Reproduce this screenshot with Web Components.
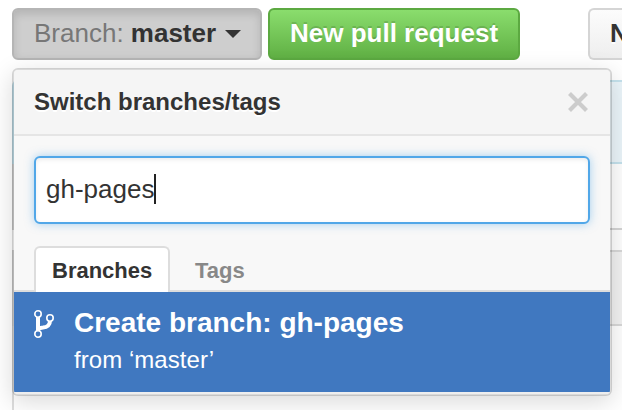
<!DOCTYPE html>
<html lang="en"><head><meta charset="utf-8"><title>Switch branches</title>
<style>
body{margin:0;width:622px;height:410px;overflow:hidden;position:relative;background:#fff;color:#333;font-family:"Liberation Sans",Arial,sans-serif}
</style></head><body>
<repo-page></repo-page>
<script>
const define=(name,html)=>customElements.define(name,class extends HTMLElement{
  constructor(){super();this.attachShadow({mode:'open'}).innerHTML=html;}
});
define('repo-button',`<style>
:host{display:flex;box-sizing:border-box;height:52px;padding:0 20px 2px;align-items:center;border:2px solid #d5d5d5;border-radius:6px;
background:linear-gradient(#fcfcfc,#eee);font-size:26px;line-height:46px;font-weight:bold;white-space:pre;text-shadow:0 2px 0 rgba(255,255,255,.9)}
:host([kind=selected]){font-weight:normal;background:#cecece;border-color:#b5b5b5;box-shadow:inset 0 4px 8px rgba(0,0,0,.13);text-shadow:none;color:#777}
:host([kind=primary]){color:#fff;border-color:#5ca941;background:linear-gradient(#8add6d,#60b044);text-shadow:0 -2px 0 rgba(0,0,0,.15)}
::slotted(b){color:#333}
i{display:none}
:host([kind=selected]) i{display:block;margin:2px 0 0 9px;border:8px solid transparent;border-top-color:#333;border-bottom:0}
</style><slot></slot><i></i>`);
define('repo-content',`<style>
:host{display:flex;flex-direction:column;margin:20px 0 0 12px}
div{box-sizing:border-box}
.tease{height:84px;background:#ebf5fa;border:2px solid #c5e2ed;border-right:0;border-radius:6px 0 0 0}
.info{height:66px;background:#fff;border:2px solid #d5d5d5;border-width:0 0 2px 2px}
.row{margin-top:20px;height:76px;background:#f2f2f2;border:2px solid #d8d8d8;border-right:0}
.rest{height:84px;border-left:2px solid #ddd;background:#fff}
</style><div class="tease"></div><div class="info"></div><div class="row"></div><div class="rest"></div>`);
define('branch-tab',`<style>
:host{display:block;box-sizing:border-box;height:46px;padding:0 16px;border:2px solid transparent;border-bottom:0;border-radius:6px 6px 0 0;
font-size:22px;font-weight:bold;line-height:45px;color:#888}
:host([selected]){background:#fff;border-color:#ddd;color:#333;width:136px}
</style><slot></slot>`);
define('branch-icon',`<style>:host{display:block;width:20px;height:28px}svg{display:block}</style>
<svg width="20" height="28" viewBox="0 0 20 28" fill="none" stroke="#fff">
<path d="M4 7V21" stroke-width="4"/><path d="M4 19.5Q5.5 17.8 9 17.6C13.5 17.2 16 14.5 16 11" stroke-width="4"/>
<g fill="#4078c0" stroke-width="1.6"><circle cx="4" cy="4" r="3.2"/><circle cx="16" cy="8" r="3.2"/><circle cx="4" cy="24" r="3.2"/></g></svg>`);
define('branch-menu',`<style>
:host{display:block;box-sizing:border-box;width:600px;height:328px;border:2px solid rgba(0,0,0,.15);border-radius:6px;background:#f8f8f8;background-clip:padding-box;box-shadow:0 6px 24px rgba(0,0,0,.15);overflow:hidden}
header{display:flex;justify-content:space-between;align-items:center;height:64px;padding:0 22px 0 20px;background:#f5f5f5;border-bottom:2px solid #e5e5e5;font-size:24px;font-weight:bold;line-height:64px;text-shadow:0 2px 0 #fff}
.filter{display:flex;align-items:center;box-sizing:border-box;margin:20px 20px 0;height:68px;padding:0 10px 2px;border:2px solid #51a7e8;border-radius:6px;background:#fff;box-shadow:inset 0 2px 4px rgba(0,0,0,.075),0 0 10px rgba(81,167,232,.5);font-size:26px}
.caret{width:2px;height:30px;background:#222}
nav{display:flex;gap:7px;height:46px;padding:0 20px;margin-top:22px;background:linear-gradient(#ddd,#ddd) bottom/100% 2px no-repeat}
.item{display:flex;box-sizing:border-box;height:100px;padding:18px 20px 0;background:#4078c0;color:#fff}
.text{margin:-4px 0 0 20px}
.title{font-size:28px;font-weight:bold;line-height:34px}
.from{font-size:24px;line-height:40px;letter-spacing:.05px}
.end{height:2px;background:#eee}
</style>
<header><span>Switch branches/tags</span><svg width="20" height="20" viewBox="0 0 20 20"><path d="M1.5 1.5 18.5 18.5M18.5 1.5 1.5 18.5" stroke="#ccc" stroke-width="4.2"/></svg></header>
<div class="filter"><span>gh-pages</span><span class="caret"></span></div>
<nav><branch-tab selected>Branches</branch-tab><branch-tab>Tags</branch-tab></nav>
<div class="item"><branch-icon></branch-icon><div class="text"><div class="title">Create branch: gh-pages</div><div class="from">from ‘master’</div></div></div><div class="end"></div>`);
define('repo-page',`<style>
:host{display:block;box-sizing:border-box;width:622px;height:410px;overflow:hidden;padding-top:8px}
.bar{display:flex;gap:6px;padding-left:12px}
.bar repo-button{flex:none}
.a{width:250px}.b{width:252px}.c{box-sizing:border-box;margin-left:62px;width:34px;padding-right:0;border-right:0;border-radius:6px 0 0 6px;overflow:hidden}
branch-menu{position:absolute;left:12px;top:68px}
</style><div class="bar"><repo-button class="a" kind="selected">Branch: <b>master</b></repo-button><repo-button class="b" kind="primary">New pull request</repo-button><repo-button class="c">N</repo-button></div>
<repo-content></repo-content><branch-menu></branch-menu>`);
</script></body></html>
